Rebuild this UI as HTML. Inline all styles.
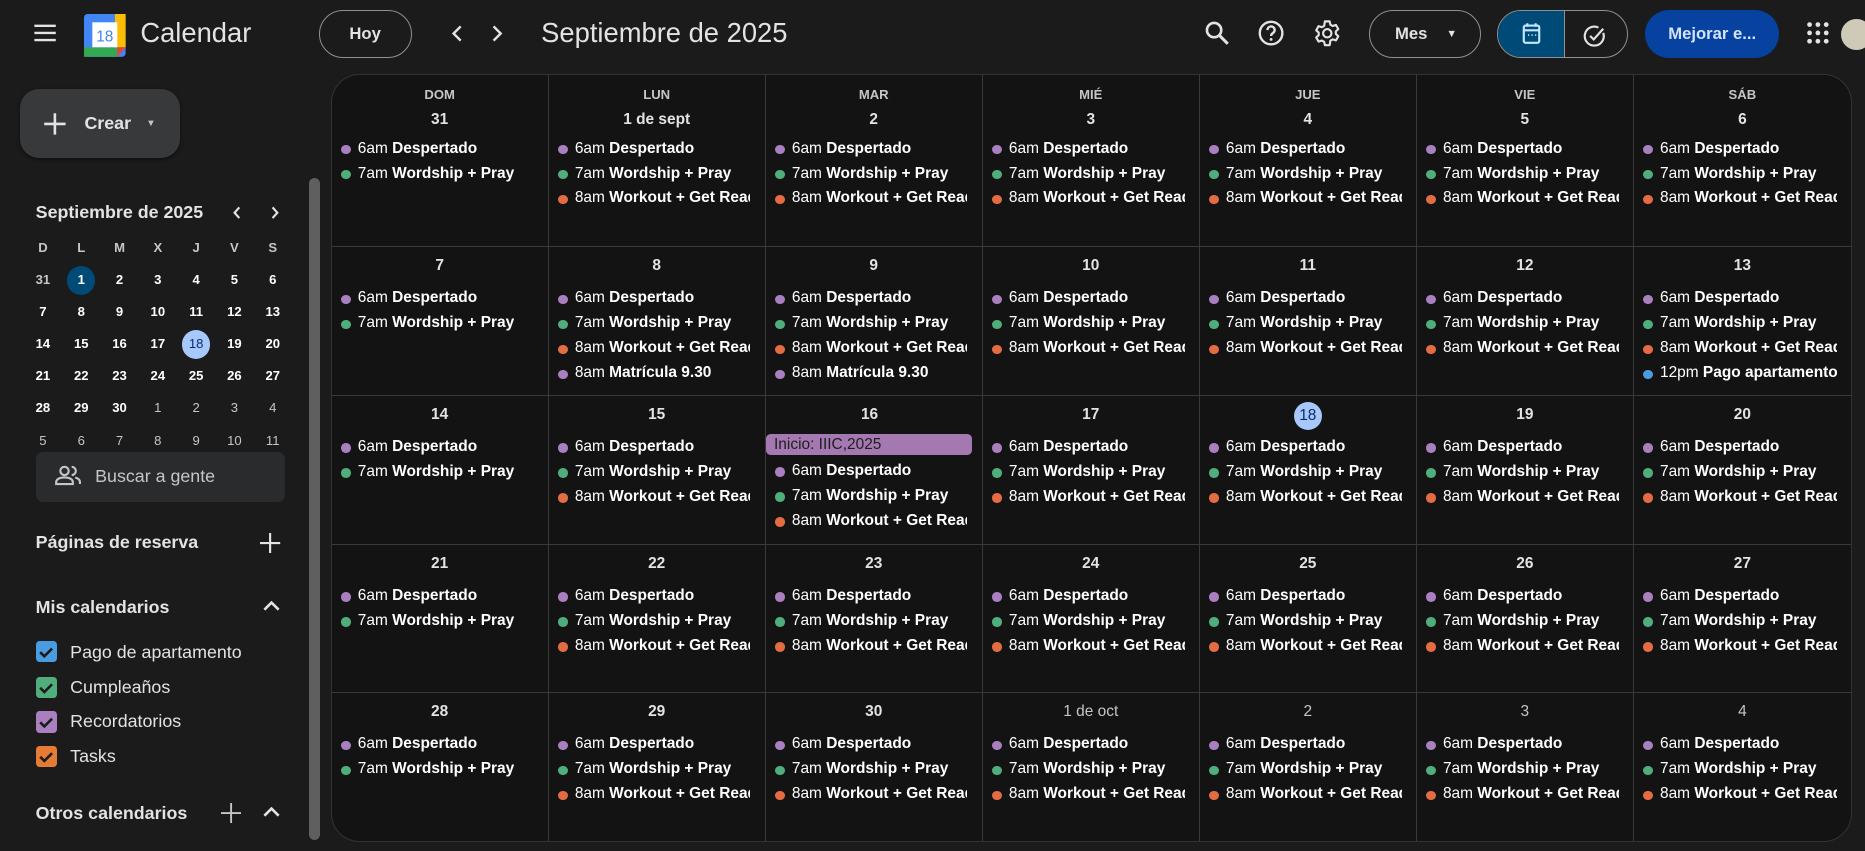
<!DOCTYPE html>
<html><head><meta charset="utf-8">
<style>
*{box-sizing:border-box;margin:0;padding:0}
html,body{width:1865px;height:851px;overflow:hidden;background:#1b1b1b}
#root{zoom:1.18941;width:1568px;height:716px;position:relative;background:#1b1b1b;color:#e3e3e3;font-family:"Liberation Sans",Arial,sans-serif}
.a{position:absolute}
.btn{position:absolute;border:1px solid #8e918f;border-radius:21px;display:flex;align-items:center;justify-content:center;font-size:14px;font-weight:bold;color:#e3e3e3}
#grid{position:absolute;left:278px;top:62px;width:1279px;height:646px;background:#131313;border:1px solid #333;border-radius:24px;overflow:hidden;display:grid;grid-template-columns:repeat(7,1fr);grid-template-rows:145px 125px 125px 125px 1fr}
.c{border-right:1px solid #3a3a3a;border-bottom:1px solid #3a3a3a;overflow:hidden;padding:0 0 0 7px}
.c:nth-child(7n){border-right:none}
.c:nth-child(n+29){border-bottom:none}
.dn{text-align:center;font-size:11px;font-weight:bold;color:#c4c7c5;margin-top:10px;height:14px;line-height:14px;padding-right:7px}
.n{text-align:center;font-size:13px;font-weight:bold;height:21px;line-height:21px;margin-top:4px;padding-right:7px}
.r .n{margin-top:6px}
.n.o{font-weight:normal;color:#c4c7c5}
.n.t span{display:inline-block;width:24px;height:24px;line-height:24px;border-radius:50%;background:#a8c7fa;color:#062e6f;font-weight:normal;margin-top:-1px}
.ev{height:21px;line-height:21px;font-size:13px;white-space:nowrap;overflow:hidden;padding-left:15px;position:relative;color:#fff;font-weight:bold;margin-right:12px}
.ev i{font-style:normal;font-weight:normal}
.ev:before{content:"";position:absolute;left:1px;top:7px;width:8px;height:8px;border-radius:50%;background:var(--c)}
.f{margin-top:3px}
.r .f{margin-top:6px}
.D{--c:#a97fbf}.W{--c:#4fae7b}.R{--c:#e46c43}.B{--c:#4a9ce0}
.bar{height:18px;line-height:18px;background:#a479b1;color:#1e1e1e;font-size:13px;border-radius:4px;padding-left:7px;margin:1px 8px 2px 0}
.mini{position:absolute;left:20px;width:224px;display:grid;grid-template-columns:repeat(7,32.2px);font-size:11px;font-weight:bold;text-align:center}
.mini div{height:27px;line-height:27px}
.cb{position:absolute;left:30px;width:18px;height:18px;border-radius:3px}
.cbl{position:absolute;left:59px;font-size:15px;color:#e3e3e3}
.sh{position:absolute;left:30px;font-size:15px;font-weight:bold;color:#e3e3e3}
</style></head><body><div id="root">
<svg class="a" style="left:27px;top:18px" width="22" height="20" viewBox="0 0 22 20"><path d="M2 4h18M2 10h18M2 16h18" stroke="#e3e3e3" stroke-width="2"/></svg>
<svg class="a" style="left:71px;top:12px" width="35" height="36" viewBox="0 0 35 36"><rect x="0" y="0" width="35" height="36" rx="3" fill="#4285f4"/><rect x="26" y="0" width="9" height="28" fill="#fbbc04"/><rect x="0" y="28" width="28" height="8" fill="#34a853"/><path d="M28 28h7l-7 8z" fill="#ea4335"/><rect x="7" y="7" width="21" height="21" fill="#fff"/><text x="17.5" y="23" font-size="13" text-anchor="middle" fill="#4285f4" font-family="Liberation Sans">18</text></svg>
<div class="a" style="left:118px;top:14px;font-size:23px;color:#e3e3e3">Calendar</div>
<div class="btn" style="left:268px;top:8px;width:78px;height:41px">Hoy</div>
<svg class="a" style="left:378px;top:20px" width="12" height="16" viewBox="0 0 12 16"><path d="M9 2L3 8l6 6" fill="none" stroke="#e3e3e3" stroke-width="2"/></svg>
<svg class="a" style="left:412px;top:20px" width="12" height="16" viewBox="0 0 12 16"><path d="M3 2l6 6-6 6" fill="none" stroke="#e3e3e3" stroke-width="2"/></svg>
<div class="a" style="left:455px;top:14px;font-size:23px;color:#e3e3e3">Septiembre de 2025</div>
<svg class="a" style="left:1012px;top:17px" width="22" height="22" viewBox="0 0 22 22"><circle cx="8.5" cy="8.5" r="6" fill="none" stroke="#e3e3e3" stroke-width="2.2"/><path d="M13 13l7 7" stroke="#e3e3e3" stroke-width="2.5"/></svg>
<svg class="a" style="left:1058px;top:17px" width="22" height="22" viewBox="0 0 22 22"><circle cx="11" cy="11" r="9.5" fill="none" stroke="#e3e3e3" stroke-width="2"/><path d="M8 8.5a3 3 0 1 1 4.5 2.5c-1 .6-1.5 1.2-1.5 2.5" fill="none" stroke="#e3e3e3" stroke-width="2"/><circle cx="11" cy="16.3" r="1.2" fill="#e3e3e3"/></svg>
<svg class="a" style="left:1104px;top:16px" width="24" height="24" viewBox="0 0 24 24"><path d="M12 8.5a3.5 3.5 0 1 0 0 7a3.5 3.5 0 1 0 0-7zM10 2h4l.6 2.8 2 1.1 2.7-.9 2 3.5-2.1 1.9v2.2l2.1 1.9-2 3.5-2.7-.9-2 1.1L14 22h-4l-.6-2.8-2-1.1-2.7.9-2-3.5 2.1-1.9v-2.2L2.7 9.5l2-3.5 2.7.9 2-1.1z" fill="none" stroke="#e3e3e3" stroke-width="1.8" stroke-linejoin="round"/></svg>
<div class="btn" style="left:1151px;top:8px;width:94px;height:41px;justify-content:flex-start;padding-left:21px">Mes<span style="margin-left:16px;font-size:9px">&#9660;</span></div>
<div class="a" style="left:1259px;top:8px;width:110px;height:41px;border:1px solid #8e918f;border-radius:21px;overflow:hidden"><div style="position:absolute;left:0;top:0;width:55px;height:41px;background:#004a77"></div><div style="position:absolute;left:55px;top:0;width:1px;height:41px;background:#8e918f"></div>
<svg class="a" style="left:20px;top:10px" width="16" height="19" viewBox="0 0 16 19"><rect x="1.5" y="3" width="13" height="14.5" rx="1.5" fill="none" stroke="#c2e7ff" stroke-width="1.8"/><path d="M1.5 7h13M4.5 1v3M11.5 1v3" stroke="#c2e7ff" stroke-width="1.8"/><path d="M5 11h1M8 11h1M11 11h1" stroke="#c2e7ff" stroke-width="1.3"/></svg>
<svg class="a" style="left:71px;top:11px" width="20" height="20" viewBox="0 0 20 20"><path d="M17 7.5A8 8 0 1 1 13 3" fill="none" stroke="#e3e3e3" stroke-width="1.8"/><path d="M6 10l3 3 8-9" fill="none" stroke="#e3e3e3" stroke-width="1.8"/></svg></div>
<div class="a" style="left:1383px;top:8px;width:113px;height:41px;border-radius:21px;background:#0842a0;color:#d3e3fd;font-size:14px;font-weight:bold;line-height:41px;text-align:center">Mejorar e...</div>
<svg class="a" style="left:1518px;top:18px" width="20" height="20" viewBox="0 0 20 20" fill="#e3e3e3"><circle cx="3" cy="3" r="2"/><circle cx="10" cy="3" r="2"/><circle cx="17" cy="3" r="2"/><circle cx="3" cy="10" r="2"/><circle cx="10" cy="10" r="2"/><circle cx="17" cy="10" r="2"/><circle cx="3" cy="17" r="2"/><circle cx="10" cy="17" r="2"/><circle cx="17" cy="17" r="2"/></svg>
<div class="a" style="left:1548px;top:16px;width:26px;height:26px;border-radius:50%;background:#cfcab8"></div>
<div class="a" style="left:17px;top:75px;width:134px;height:58px;border-radius:16px;background:#37393b;box-shadow:0 1px 3px rgba(0,0,0,.5)"></div>
<svg class="a" style="left:36px;top:94px" width="20" height="20" viewBox="0 0 20 20"><path d="M10 1v18M1 10h18" stroke="#e3e3e3" stroke-width="2.2"/></svg>
<div class="a" style="left:71px;top:95px;font-size:15px;font-weight:bold;color:#e3e3e3">Crear</div>
<div class="a" style="left:123px;top:99px;font-size:8px;color:#c4c7c5">&#9660;</div>
<div class="a" style="left:30px;top:170px;font-size:15px;font-weight:bold;color:#e3e3e3">Septiembre de 2025</div>
<svg class="a" style="left:194px;top:172px" width="10" height="13" viewBox="0 0 10 13"><path d="M7 2L3 6.5 7 11" fill="none" stroke="#e3e3e3" stroke-width="1.8"/></svg>
<svg class="a" style="left:226px;top:172px" width="10" height="13" viewBox="0 0 10 13"><path d="M3 2l4 4.5L3 11" fill="none" stroke="#e3e3e3" stroke-width="1.8"/></svg>
<div class="mini" style="top:195px;color:#c4c7c5">
<div>D</div><div>L</div><div>M</div><div>X</div><div>J</div><div>V</div><div>S</div>
<div>31</div><div><span style="display:inline-block;width:24px;height:24px;line-height:24px;border-radius:50%;background:#004a77;color:#fff">1</span></div><div style="color:#fff">2</div><div style="color:#fff">3</div><div style="color:#fff">4</div><div style="color:#fff">5</div><div style="color:#fff">6</div>
</div>
<div class="mini" style="top:249px;color:#fff">
<div>7</div><div>8</div><div>9</div><div>10</div><div>11</div><div>12</div><div>13</div>
<div>14</div><div>15</div><div>16</div><div>17</div><div><span style="display:inline-block;width:24px;height:24px;line-height:24px;border-radius:50%;background:#a8c7fa;color:#062e6f;font-weight:normal">18</span></div><div>19</div><div>20</div>
<div>21</div><div>22</div><div>23</div><div>24</div><div>25</div><div>26</div><div>27</div>
<div>28</div><div>29</div><div>30</div><div style="color:#c4c7c5;font-weight:normal">1</div><div style="color:#c4c7c5;font-weight:normal">2</div><div style="color:#c4c7c5;font-weight:normal">3</div><div style="color:#c4c7c5;font-weight:normal">4</div>
<div style="color:#c4c7c5;font-weight:normal">5</div><div style="color:#c4c7c5;font-weight:normal">6</div><div style="color:#c4c7c5;font-weight:normal">7</div><div style="color:#c4c7c5;font-weight:normal">8</div><div style="color:#c4c7c5;font-weight:normal">9</div><div style="color:#c4c7c5;font-weight:normal">10</div><div style="color:#c4c7c5;font-weight:normal">11</div>
</div>
<div class="a" style="left:30px;top:380px;width:210px;height:42px;border-radius:6px;background:#2a2b2d"></div>
<svg class="a" style="left:46px;top:391px" width="22" height="18" viewBox="0 0 22 18"><circle cx="8" cy="5" r="3.5" fill="none" stroke="#c4c7c5" stroke-width="1.8"/><path d="M1 16v-1.5c0-2.5 3-4 7-4s7 1.5 7 4V16zM14 1.5a3.5 3.5 0 0 1 0 7M17 10.5c2.5.7 4 2 4 4V16" fill="none" stroke="#c4c7c5" stroke-width="1.8"/></svg>
<div class="a" style="left:80px;top:392px;font-size:15px;color:#c4c7c5">Buscar a gente</div>
<div class="sh" style="top:447px">Páginas de reserva</div>
<svg class="a" style="left:219px;top:448px" width="17" height="17" viewBox="0 0 17 17"><path d="M8.5 0v17M0 8.5h17" stroke="#e3e3e3" stroke-width="1.8"/></svg>
<div class="sh" style="top:502px">Mis calendarios</div>
<svg class="a" style="left:220px;top:504px" width="16" height="11" viewBox="0 0 16 11"><path d="M2 9l6-6 6 6" fill="none" stroke="#e3e3e3" stroke-width="2.2"/></svg>
<svg class="a" style="left:220px;top:677px" width="16" height="11" viewBox="0 0 16 11"><path d="M2 9l6-6 6 6" fill="none" stroke="#e3e3e3" stroke-width="2.2"/></svg>
<svg class="a" style="left:186px;top:675px" width="17" height="17" viewBox="0 0 17 17"><path d="M8.5 0v17M0 8.5h17" stroke="#c4c7c5" stroke-width="1.6"/></svg>
<div class="cb" style="top:539px;background:#4a9ce0"></div><div class="cbl" style="top:540px">Pago de apartamento</div>
<div class="cb" style="top:569px;background:#4fae7b"></div><div class="cbl" style="top:569px">Cumpleaños</div>
<div class="cb" style="top:598px;background:#a97fbf"></div><div class="cbl" style="top:598px">Recordatorios</div>
<div class="cb" style="top:627px;background:#e57c35"></div><div class="cbl" style="top:627px">Tasks</div>
<svg class="a" style="left:33px;top:542px" width="13" height="100" viewBox="0 0 13 100"><g fill="none" stroke="#1b1b1b" stroke-width="2.2"><path d="M1 6l3.5 3.5L11 3"/><path d="M1 36l3.5 3.5L11 33"/><path d="M1 65l3.5 3.5L11 62"/><path d="M1 94l3.5 3.5L11 91"/></g></svg>
<div class="sh" style="top:675px">Otros calendarios</div>
<div class="a" style="left:260px;top:150px;width:9px;height:556px;border-radius:5px;background:#5f5f5f"></div>
<div id="grid">
<div class="c"><div class="dn">DOM</div><div class="n">31</div><div class="ev D f"><i>6am</i> Despertado</div><div class="ev W"><i>7am</i> Wordship + Pray</div></div>
<div class="c"><div class="dn">LUN</div><div class="n">1 de sept</div><div class="ev D f"><i>6am</i> Despertado</div><div class="ev W"><i>7am</i> Wordship + Pray</div><div class="ev R"><i>8am</i> Workout + Get Ready</div></div>
<div class="c"><div class="dn">MAR</div><div class="n">2</div><div class="ev D f"><i>6am</i> Despertado</div><div class="ev W"><i>7am</i> Wordship + Pray</div><div class="ev R"><i>8am</i> Workout + Get Ready</div></div>
<div class="c"><div class="dn">MIÉ</div><div class="n">3</div><div class="ev D f"><i>6am</i> Despertado</div><div class="ev W"><i>7am</i> Wordship + Pray</div><div class="ev R"><i>8am</i> Workout + Get Ready</div></div>
<div class="c"><div class="dn">JUE</div><div class="n">4</div><div class="ev D f"><i>6am</i> Despertado</div><div class="ev W"><i>7am</i> Wordship + Pray</div><div class="ev R"><i>8am</i> Workout + Get Ready</div></div>
<div class="c"><div class="dn">VIE</div><div class="n">5</div><div class="ev D f"><i>6am</i> Despertado</div><div class="ev W"><i>7am</i> Wordship + Pray</div><div class="ev R"><i>8am</i> Workout + Get Ready</div></div>
<div class="c"><div class="dn">SÁB</div><div class="n">6</div><div class="ev D f"><i>6am</i> Despertado</div><div class="ev W"><i>7am</i> Wordship + Pray</div><div class="ev R"><i>8am</i> Workout + Get Ready</div></div>

<div class="c r"><div class="n">7</div><div class="ev D f"><i>6am</i> Despertado</div><div class="ev W"><i>7am</i> Wordship + Pray</div></div>
<div class="c r"><div class="n">8</div><div class="ev D f"><i>6am</i> Despertado</div><div class="ev W"><i>7am</i> Wordship + Pray</div><div class="ev R"><i>8am</i> Workout + Get Ready</div><div class="ev D"><i>8am</i> Matrícula 9.30</div></div>
<div class="c r"><div class="n">9</div><div class="ev D f"><i>6am</i> Despertado</div><div class="ev W"><i>7am</i> Wordship + Pray</div><div class="ev R"><i>8am</i> Workout + Get Ready</div><div class="ev D"><i>8am</i> Matrícula 9.30</div></div>
<div class="c r"><div class="n">10</div><div class="ev D f"><i>6am</i> Despertado</div><div class="ev W"><i>7am</i> Wordship + Pray</div><div class="ev R"><i>8am</i> Workout + Get Ready</div></div>
<div class="c r"><div class="n">11</div><div class="ev D f"><i>6am</i> Despertado</div><div class="ev W"><i>7am</i> Wordship + Pray</div><div class="ev R"><i>8am</i> Workout + Get Ready</div></div>
<div class="c r"><div class="n">12</div><div class="ev D f"><i>6am</i> Despertado</div><div class="ev W"><i>7am</i> Wordship + Pray</div><div class="ev R"><i>8am</i> Workout + Get Ready</div></div>
<div class="c r"><div class="n">13</div><div class="ev D f"><i>6am</i> Despertado</div><div class="ev W"><i>7am</i> Wordship + Pray</div><div class="ev R"><i>8am</i> Workout + Get Ready</div><div class="ev B"><i>12pm</i> Pago apartamento</div></div>

<div class="c r"><div class="n">14</div><div class="ev D f"><i>6am</i> Despertado</div><div class="ev W"><i>7am</i> Wordship + Pray</div></div>
<div class="c r"><div class="n">15</div><div class="ev D f"><i>6am</i> Despertado</div><div class="ev W"><i>7am</i> Wordship + Pray</div><div class="ev R"><i>8am</i> Workout + Get Ready</div></div>
<div class="c r" style="padding-left:0"><div class="n" style="padding-left:0">16</div><div class="bar" style="margin-left:0;margin-top:5px;margin-bottom:3px">Inicio: IIIC,2025</div><div style="padding-left:7px"><div class="ev D"><i>6am</i> Despertado</div><div class="ev W"><i>7am</i> Wordship + Pray</div><div class="ev R"><i>8am</i> Workout + Get Ready</div></div></div>
<div class="c r"><div class="n">17</div><div class="ev D f"><i>6am</i> Despertado</div><div class="ev W"><i>7am</i> Wordship + Pray</div><div class="ev R"><i>8am</i> Workout + Get Ready</div></div>
<div class="c r"><div class="n t"><span>18</span></div><div class="ev D f"><i>6am</i> Despertado</div><div class="ev W"><i>7am</i> Wordship + Pray</div><div class="ev R"><i>8am</i> Workout + Get Ready</div></div>
<div class="c r"><div class="n">19</div><div class="ev D f"><i>6am</i> Despertado</div><div class="ev W"><i>7am</i> Wordship + Pray</div><div class="ev R"><i>8am</i> Workout + Get Ready</div></div>
<div class="c r"><div class="n">20</div><div class="ev D f"><i>6am</i> Despertado</div><div class="ev W"><i>7am</i> Wordship + Pray</div><div class="ev R"><i>8am</i> Workout + Get Ready</div></div>

<div class="c r"><div class="n">21</div><div class="ev D f"><i>6am</i> Despertado</div><div class="ev W"><i>7am</i> Wordship + Pray</div></div>
<div class="c r"><div class="n">22</div><div class="ev D f"><i>6am</i> Despertado</div><div class="ev W"><i>7am</i> Wordship + Pray</div><div class="ev R"><i>8am</i> Workout + Get Ready</div></div>
<div class="c r"><div class="n">23</div><div class="ev D f"><i>6am</i> Despertado</div><div class="ev W"><i>7am</i> Wordship + Pray</div><div class="ev R"><i>8am</i> Workout + Get Ready</div></div>
<div class="c r"><div class="n">24</div><div class="ev D f"><i>6am</i> Despertado</div><div class="ev W"><i>7am</i> Wordship + Pray</div><div class="ev R"><i>8am</i> Workout + Get Ready</div></div>
<div class="c r"><div class="n">25</div><div class="ev D f"><i>6am</i> Despertado</div><div class="ev W"><i>7am</i> Wordship + Pray</div><div class="ev R"><i>8am</i> Workout + Get Ready</div></div>
<div class="c r"><div class="n">26</div><div class="ev D f"><i>6am</i> Despertado</div><div class="ev W"><i>7am</i> Wordship + Pray</div><div class="ev R"><i>8am</i> Workout + Get Ready</div></div>
<div class="c r"><div class="n">27</div><div class="ev D f"><i>6am</i> Despertado</div><div class="ev W"><i>7am</i> Wordship + Pray</div><div class="ev R"><i>8am</i> Workout + Get Ready</div></div>

<div class="c r"><div class="n">28</div><div class="ev D f"><i>6am</i> Despertado</div><div class="ev W"><i>7am</i> Wordship + Pray</div></div>
<div class="c r"><div class="n">29</div><div class="ev D f"><i>6am</i> Despertado</div><div class="ev W"><i>7am</i> Wordship + Pray</div><div class="ev R"><i>8am</i> Workout + Get Ready</div></div>
<div class="c r"><div class="n">30</div><div class="ev D f"><i>6am</i> Despertado</div><div class="ev W"><i>7am</i> Wordship + Pray</div><div class="ev R"><i>8am</i> Workout + Get Ready</div></div>
<div class="c r"><div class="n o">1 de oct</div><div class="ev D f"><i>6am</i> Despertado</div><div class="ev W"><i>7am</i> Wordship + Pray</div><div class="ev R"><i>8am</i> Workout + Get Ready</div></div>
<div class="c r"><div class="n o">2</div><div class="ev D f"><i>6am</i> Despertado</div><div class="ev W"><i>7am</i> Wordship + Pray</div><div class="ev R"><i>8am</i> Workout + Get Ready</div></div>
<div class="c r"><div class="n o">3</div><div class="ev D f"><i>6am</i> Despertado</div><div class="ev W"><i>7am</i> Wordship + Pray</div><div class="ev R"><i>8am</i> Workout + Get Ready</div></div>
<div class="c r"><div class="n o">4</div><div class="ev D f"><i>6am</i> Despertado</div><div class="ev W"><i>7am</i> Wordship + Pray</div><div class="ev R"><i>8am</i> Workout + Get Ready</div></div>
</div>
</div></body></html>
